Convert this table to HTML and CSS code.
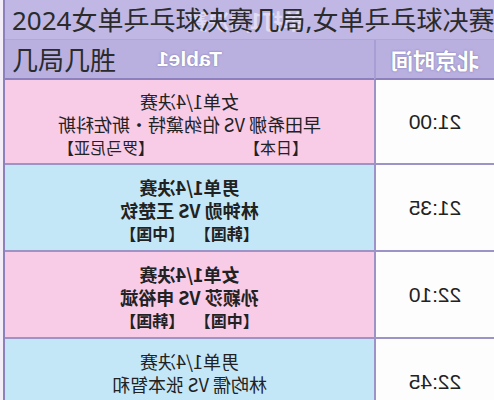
FILE: index.html
```html
<!DOCTYPE html>
<html lang="zh-CN">
<head>
<meta charset="utf-8">
<title>2024女单乒乓球决赛几局</title>
<link rel="stylesheet" href="styles.css">
</head>
<body>
<div class="page">
  <div class="sheet">
    <div class="grid">
      <div class="caption"><span>单打1/4决赛</span></div>
      <div class="head time-head">北京时间</div>
      <div class="head match-head">Table1</div>

      <div class="time first-row">21:00</div>
      <div class="match pink first-row">
        <div class="block">
          <div class="line">女单1/4决赛</div>
          <div class="line">早田希娜 VS 伯纳黛特·斯佐科斯</div>
          <div class="line nations first"><span>【日本】</span><span>【罗马尼亚】</span></div>
        </div>
      </div>

      <div class="time">21:35</div>
      <div class="match blue bold">
        <div class="block">
          <div class="line">男单1/4决赛</div>
          <div class="line">林钟勋 VS 王楚钦</div>
          <div class="line nations"><span>【韩国】</span><span>【中国】</span></div>
        </div>
      </div>

      <div class="time">22:10</div>
      <div class="match pink bold">
        <div class="block">
          <div class="line">女单1/4决赛</div>
          <div class="line">孙颖莎 VS 申裕斌</div>
          <div class="line nations"><span>【中国】</span><span>【韩国】</span></div>
        </div>
      </div>

      <div class="time">22:45</div>
      <div class="match blue">
        <div class="block">
          <div class="line">男单1/4决赛</div>
          <div class="line">林昀儒 VS 张本智和</div>
          <div class="line nations"><span>【中国台北】</span><span>【日本】</span></div>
        </div>
      </div>
    </div>
  </div>
  <h1 class="title">2024女单乒乓球决赛几局,女单乒乓球决赛几局几胜</h1>
</div>
</body>
</html>
```

FILE: styles.css
```css
html, body {
  margin: 0;
  padding: 0;
  background: #ffffff;
  overflow: hidden;
}

.page {
  position: relative;
  width: 494px;
  height: 400px;
  overflow: hidden;
}

.sheet {
  width: 494px;
  box-sizing: border-box;
  padding-right: 3px;
  background: #f4eef8;
  transform: scaleX(-1);
}

.grid {
  display: grid;
  grid-template-columns: 120px 1fr;
  border-right: 2px solid #8c80bd;
  font-family: "Noto Sans CJK SC", "Noto Sans", sans-serif;
  color: #222;
}

.caption {
  grid-column: 1 / -1;
  height: 40px;
  box-sizing: border-box;
  background: #c0b7e5;
  border-bottom: 1px solid #b1a7db;
  display: flex;
  align-items: center;
  padding-left: 190px;
}

.caption span {
  font-size: 21px;
  font-weight: 700;
  color: #ffffff;
  opacity: 0.5;
}

.head {
  height: 40px;
  box-sizing: border-box;
  background: #b9b0e0;
  border-bottom: 2px solid #8c80bd;
  display: flex;
  align-items: center;
  justify-content: center;
  color: #ffffff;
  font-weight: 700;
  text-shadow: 0 0 2px rgba(90, 80, 140, 0.7);
}

.time-head {
  font-size: 22px;
  border-right: 2px solid #a89ed6;
}

.match-head {
  font-family: "Liberation Sans", Arial, sans-serif;
  font-size: 21px;
}

.time {
  height: 87px;
  box-sizing: border-box;
  background: #fdfdfd;
  border-right: 2px solid #9d93c6;
  border-bottom: 2px solid #9d93c6;
  display: flex;
  align-items: center;
  justify-content: center;
  font-family: "Liberation Sans", Arial, sans-serif;
  font-size: 21px;
  color: #222;
}

.match {
  height: 87px;
  box-sizing: border-box;
  border-bottom: 2px solid #9d93c6;
  display: flex;
  align-items: center;
  justify-content: center;
  font-size: 18px;
}

.first-row {
  height: 85px;
}

.pink { background: #f8cbe7; }
.blue { background: #c4e7f7; }
.bold { font-weight: 700; }

.block {
  display: flex;
  flex-direction: column;
  align-items: center;
  margin-top: 5px;
}

.line {
  line-height: 23px;
  white-space: nowrap;
}

.nations {
  align-self: stretch;
  display: flex;
  justify-content: space-between;
  font-size: 16px;
}

.nations.first {
  padding-left: 13px;
}

.title {
  position: absolute;
  left: 12px;
  top: 0;
  width: 500px;
  margin: 0;
  font-family: "Noto Sans", "Noto Sans CJK SC", sans-serif;
  font-size: 26px;
  font-weight: 400;
  line-height: 40px;
  color: #2b2b2b;
}
```
